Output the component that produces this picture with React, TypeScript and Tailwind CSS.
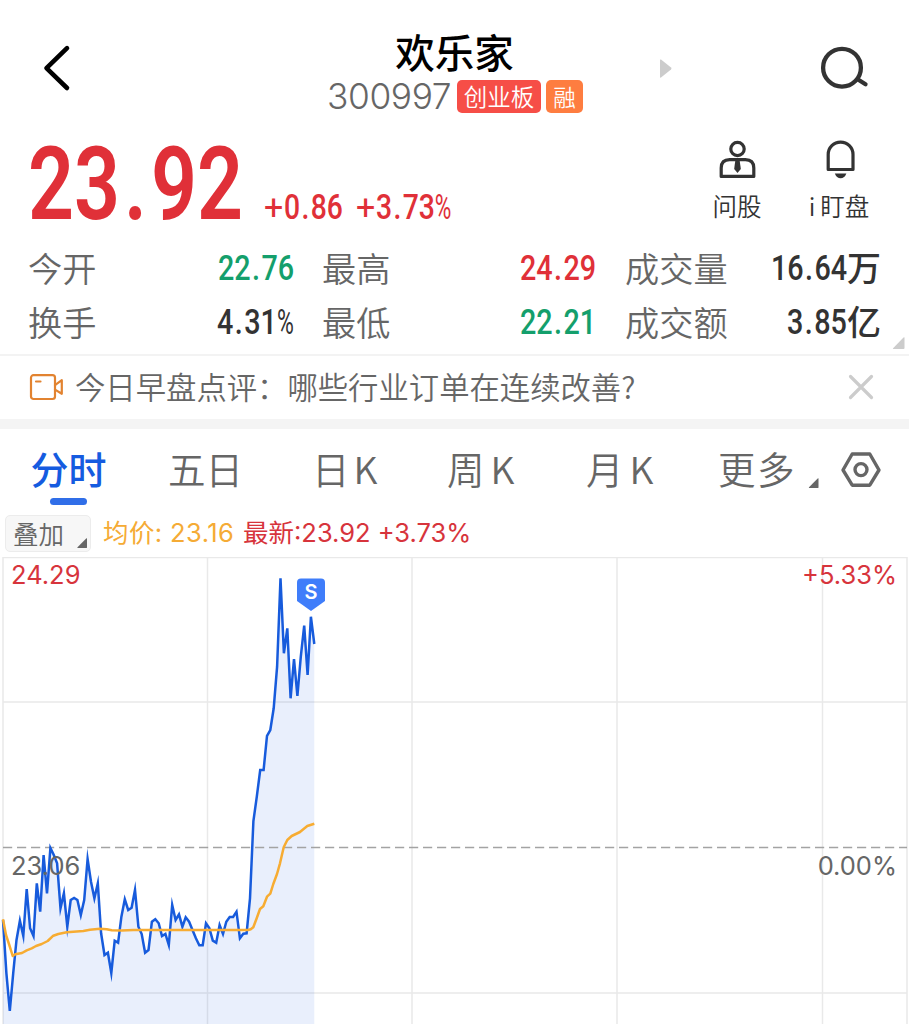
import type { ReactNode } from "react";

const CHART_STEP = 3.384;

const prices = [
  363, 416.3, 454, 416.3, 383, 363.7, 379, 332, 371.3, 379, 326.3, 354.7, 298, 336.3, 291, 298, 306.3, 351.3, 336.3,
  369.7, 343, 341, 343, 358, 343, 302, 324.7, 341.3, 326.3, 376.3, 398, 395.7, 416, 383.7, 385.7, 359.7, 342.3, 353,
  350.7, 333, 369.7, 377, 395.7, 393, 364.7, 362.3, 366.3, 379, 377, 388, 348, 363, 357.3, 369.7, 360.3, 364.7, 373,
  381.3, 388.3, 388.3, 366.3, 371.3, 383.7, 385.7, 368, 377, 364.7, 360, 360, 354.7, 381.3, 376.7, 376.3, 341.3, 264,
  239.7, 213, 213, 179, 173, 151.3, 109.7, 21.3, 96.3, 71.3, 141.3, 102, 139, 99.7, 68.7, 118, 59.7, 87,
];

const averageLine =
  "3,362.3 6,378 9.3,388 12.7,399 15.3,397.3 22,396 26.7,393.3 31.7,391.3 36,389 41.7,387 47.7,384 53.3,378.7 58.3,377 66.7,375.3 83.3,374 90,372.7 100,371.7 106.7,372.3 111.7,373.3 121.7,373.6 133.3,373 248.3,373 250.7,372.3 253.3,370.3 256.7,361.3 260,352 263.3,349.3 267,339.7 270.3,336.7 273.3,327 277,317 280,306.3 283.7,290.3 287.3,283 291.7,279 300,275 303.3,272.3 307.3,269 314.3,266.7";

const priceLine = prices.map((y, i) => `${(3 + i * CHART_STEP).toFixed(1)},${y}`).join(" ");

const glyphClass: Record<string, string> = {
  ".": "mx-[0.05em]",
  "+": "inline-block origin-left scale-x-[1.2] mr-[0.14em] font-normal",
  "%": "inline-block origin-left scale-x-[0.8] mr-[-0.14em] font-normal",
};

function DinNumber({ children, className = "" }: { children: string; className?: string }) {
  return (
    <span className={`inline-block whitespace-nowrap font-[Roboto,sans-serif] leading-none ${className}`}>
      {children.split("").map((c, i) => (
        <span key={i} className={glyphClass[c] ?? ""}>
          {c}
        </span>
      ))}
    </span>
  );
}

function Stat({ label, value, color, unit }: { label: string; value: string; color: string; unit?: string }) {
  return (
    <div className="flex h-[54px] items-center justify-between">
      <span className="pb-px text-[34.2px] leading-none font-[350] text-[#666]">{label}</span>
      <span className={`flex items-center ${color}`}>
        <DinNumber className="origin-right scale-x-[0.81] pt-[2px] text-[35.5px] font-medium">{value}</DinNumber>
        {unit && <span className="pb-[2px] text-[34px] leading-none font-medium">{unit}</span>}
      </span>
    </div>
  );
}

function Tab({ children, className }: { children: ReactNode; className: string }) {
  return <div className={`whitespace-nowrap text-[37.5px] leading-[50px] font-[350] text-[#666] ${className}`}>{children}</div>;
}

function Corner({ className }: { className: string }) {
  return (
    <svg viewBox="0 0 12 12" className={className}>
      <path d="M12 0.5V11a1 1 0 0 1-1 1H0.8Q0 12 0.6 11.2L11 0.6Q12 0 12 0.5Z" fill="currentColor" />
    </svg>
  );
}

export default function App() {
  return (
    <div className="flex h-[1024px] w-[909px] flex-col overflow-hidden bg-white font-['Noto_Sans_CJK_SC',sans-serif] text-[#333]">
      <header className="flex h-[124px] shrink-0">
        <div className="w-[328px] pt-[44px] pl-[42px]">
          <svg width="30" height="48" viewBox="0 0 30 48" fill="none" stroke="#000" strokeWidth="4.6" strokeLinecap="round" strokeLinejoin="round">
            <path d="M25 4.2 4.5 24.2 25 44" />
          </svg>
        </div>
        <div className="flex w-[256px] flex-col items-center pt-[30px]">
          <h1 className="h-[50px] pr-[3px] text-[39.5px] leading-[42px] font-medium whitespace-nowrap text-black">欢乐家</h1>
          <div className="flex w-full items-start">
            <span className="ml-[-1px] w-[130px] font-[Inter,sans-serif] text-[35.3px] leading-[34px] font-[330] tracking-[-0.4px] text-[#666]">300997</span>
            <span className="flex h-[33px] w-[84px] shrink-0 items-center justify-center rounded-[5px] bg-[#f64e47] text-[23.5px] leading-none font-[350] text-white">创业板</span>
            <span className="ml-[5px] flex h-[33px] w-[37px] shrink-0 items-center justify-center rounded-[5px] bg-[#fe7d40] pb-px text-[22.5px] leading-none font-[350] text-white">融</span>
          </div>
        </div>
        <div className="w-[236px] pt-[59px] pl-[76px]">
          <svg width="12" height="19" viewBox="0 0 12 19" fill="#ccc">
            <path d="M0 1Q0 0 1 0.6L11 8.6Q12 9.5 11 10.4L1 18.4Q0 19 0 18Z" />
          </svg>
        </div>
        <div className="pt-[46px]">
          <svg width="50" height="46" viewBox="0 0 50 46" fill="none" stroke="#333" strokeWidth="4.3" strokeLinecap="round">
            <circle cx="22" cy="21.7" r="18.9" />
            <path d="M38 33.5 45.5 38.3" />
          </svg>
        </div>
      </header>

      <section className="flex h-[117px] shrink-0 text-[#e03038]">
        <div className="w-[233px] pt-[9px] pl-[28px]">
          <DinNumber className="origin-left scale-x-[0.79] text-[102px] font-semibold">23.92</DinNumber>
        </div>
        <div className="w-[94px] pt-[66px] pl-[31px]">
          <DinNumber className="origin-left scale-x-[0.82] text-[34.5px] font-medium">+0.86</DinNumber>
        </div>
        <div className="w-[369px] pt-[66px] pl-[29px]">
          <DinNumber className="origin-left scale-x-[0.82] text-[34.5px] font-medium">+3.73%</DinNumber>
        </div>
        <div className="flex w-[82px] flex-col items-center pt-[16px] text-[#333]">
          <svg width="37" height="40" viewBox="0 0 37 40" fill="none" stroke="#333" strokeWidth="3.2" strokeLinejoin="round">
            <circle cx="18.5" cy="9" r="6.7" />
            <path d="M2.2 36.4V28Q2.2 19.6 10.6 19.6H26.4Q34.8 19.6 34.8 28V36.4Z" />
            <path d="M16.3 20.5H20.7L21.8 29 18.5 33 15.2 29Z" fill="#333" stroke="none" />
          </svg>
          <span className="mt-[12px] text-[24.5px] leading-[28px] font-[350] whitespace-nowrap">问股</span>
        </div>
        <div className="flex flex-1 flex-col items-center pr-[9px] text-[#333]">
          <svg className="mt-[16px] ml-[2px]" width="32" height="40" viewBox="0 0 32 40" fill="none" stroke="#333" strokeWidth="3.2" strokeLinejoin="round">
            <path d="M4.2 29.5V14.5A12.4 12.4 0 0 1 29 14.5V29.5Z" />
            <path d="M10.8 33.5H22.4Q20.6 38.2 16.6 38.2T10.8 33.5Z" fill="#333" stroke="none" />
          </svg>
          <span className="mt-[12px] text-[24.5px] leading-[28px] font-[350] whitespace-nowrap">
            <span className="mr-[5px]">i</span>盯盘
          </span>
        </div>
      </section>

      <section className="relative flex h-[113px] shrink-0 pl-[28px]">
        <div className="w-[266px]">
          <Stat label="今开" value="22.76" color="text-[#149f6c]" />
          <Stat label="换手" value="4.31%" color="text-[#333]" />
        </div>
        <div className="ml-[28px] w-[274px]">
          <Stat label="最高" value="24.29" color="text-[#e03038]" />
          <Stat label="最低" value="22.21" color="text-[#149f6c]" />
        </div>
        <div className="ml-[29px] w-[256px]">
          <Stat label="成交量" value="16.64" unit="万" color="text-[#333]" />
          <Stat label="成交额" value="3.85" unit="亿" color="text-[#333]" />
        </div>
        <Corner className="absolute right-[4px] bottom-[5px] h-[12px] w-[13px] text-[#ccc]" />
      </section>

      <section className="flex h-[65px] shrink-0 items-center border-t-2 border-[#f3f3f3] pr-[35px] pb-[2px] pl-[29px]">
        <svg width="35" height="28" viewBox="0 0 35 28" fill="none" stroke="#e28330" strokeWidth="2.2" strokeLinejoin="round" strokeLinecap="round">
          <rect x="2" y="2.2" width="24" height="23.8" rx="2.5" />
          <path d="M7 8.5H11.5M26 12.2 32.8 7.2V20.8L26 16.6" />
        </svg>
        <span className="ml-[11px] flex-1 pb-px text-[30.35px] leading-none font-[350] whitespace-nowrap text-[#666]">
          今日早盘点评：哪些行业订单在连续改善?
        </span>
        <svg width="26" height="26" viewBox="0 0 26 26" stroke="#ccc" strokeWidth="3.2" strokeLinecap="round">
          <path d="M2.5 2.5 23.5 23.5M23.5 2.5 2.5 23.5" />
        </svg>
      </section>

      <div className="h-[10px] shrink-0 bg-[#f4f4f4]" />

      <nav className="flex h-[85px] shrink-0 pt-[14px]">
        <div className="flex w-[137px] flex-col items-center">
          <span className="text-[38px] leading-[50px] font-medium text-[#155be0]">分时</span>
          <span className="mt-[5px] h-[7px] w-[37px] rounded-full bg-[#306ee8]" />
        </div>
        <Tab className="w-[139px] pl-[31px]">五日</Tab>
        <Tab className="w-[140px] pl-[36px]">日<span className="ml-[4px]">K</span></Tab>
        <Tab className="w-[140px] pl-[31px]">周<span className="ml-[6px]">K</span></Tab>
        <Tab className="w-[162px] pl-[30px]">月<span className="ml-[6px]">K</span></Tab>
        <Tab className="w-[90px] tracking-[1.5px]">更多</Tab>
        <Corner className="mt-[35px] h-[10px] w-[11px] text-[#666]" />
        <svg className="mt-[8px] ml-[22px]" width="40" height="38" viewBox="0 0 40 38" fill="none" stroke="#666" strokeWidth="3.4" strokeLinejoin="round">
          <path d="M11.2 3H28.8L38 19 28.8 34.2H11.2L2 19Z" />
          <circle cx="20" cy="18.6" r="6" />
        </svg>
      </nav>

      <div className="flex h-[43px] shrink-0 items-start pl-[5px] text-[25.5px]">
        <div className="mt-[1px] flex h-[37px] w-[86px] rounded-[5px] border border-[#ececec] bg-[#f7f7f7] pl-[7px] leading-[33px] font-[350] text-[#666]">
          <span className="w-[64px]">叠加</span>
          <Corner className="mt-[22px] h-[10px] w-[10px]" />
        </div>
        <div className="flex pl-[12px] font-[Inter,'Noto_Sans_CJK_SC',sans-serif] leading-[38px] whitespace-nowrap text-[#f5ab35]">
          <span className="w-[140px] tracking-[0.4px]">均价: 23.16</span>
          <span className="text-[#d7343c]">最新:23.92 +3.73%</span>
        </div>
      </div>

      <section className="relative h-[467px] shrink-0 font-[Inter,sans-serif] text-[25.5px] leading-[28px]">
        <svg width="909" height="467" viewBox="0 0 909 467" fill="none" className="block">
          <path d="M3 .5H907M3 145H907M3 436H907M3 0V467M207.5 0V467M412 0V467M617 0V467M822.5 0V467M907 0V467" stroke="#e9e9e9" strokeWidth="1.5" />
          <polygon points={`3,467 ${priceLine} 314.3,467`} fill="#2b62e2" fillOpacity="0.1" />
          <path d="M3 290.5H907" stroke="#a3a3a3" strokeWidth="1.4" strokeDasharray="9.2 4.8" />
          <polyline points={priceLine} stroke="#175bdc" strokeWidth="2.5" strokeMiterlimit="10" />
          <polyline points={averageLine} stroke="#f7ac32" strokeWidth="2.5" strokeLinejoin="round" />
          <path d="M301 21.5H321Q325 21.5 325 25.5V44L311 54 297 44V25.5Q297 21.5 301 21.5Z" fill="#3f7dfa" />
        </svg>
        <span className="absolute top-[21px] left-[297px] w-[28px] text-center text-[20px] font-semibold text-white">S</span>
        <span className="absolute top-[4px] left-[11px] text-[#d7343c]">24.29</span>
        <span className="absolute top-[4px] right-[12px] text-[#d7343c]">+5.33%</span>
        <span className="absolute top-[295px] left-[11px] text-[#666]">23.06</span>
        <span className="absolute top-[295px] right-[12px] text-[#666]">0.00%</span>
      </section>
    </div>
  );
}
